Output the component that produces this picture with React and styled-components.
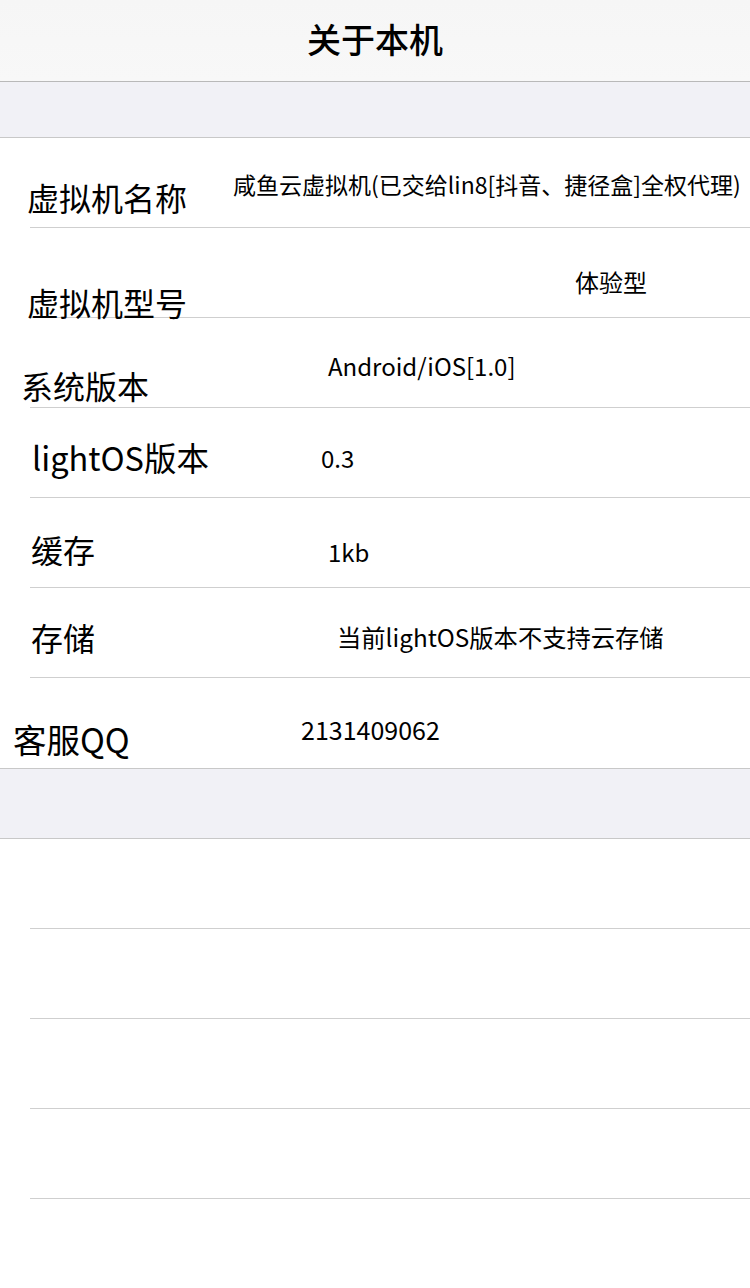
import React from 'react';
import styled, { createGlobalStyle } from 'styled-components';

const GlobalStyle = createGlobalStyle`
  html, body {
    margin: 0;
    padding: 0;
    background: #ffffff;
  }
  body {
    font-family: "Noto Sans CJK SC", "Noto Sans", sans-serif;
    color: #000;
  }
`

const Page = styled.div`
  width: 750px;
  min-height: 1288px;
  background: #ffffff;
`

const NavBar = styled.div`
  height: 81px;
  border-bottom: 1px solid #b9b9b9;
  background: linear-gradient(#f6f6f6, #f8f8f8);
  display: flex;
  align-items: center;
  justify-content: center;
`

const NavTitle = styled.div`
  font-size: 34px;
  font-weight: 500;
  line-height: 1;
  margin-top: -4px;
`

const GroupGap = styled.div`
  height: ${props => props.$height}px;
  background: #f1f1f6;
  border-bottom: 1px solid #c8c8c8;
  border-top: ${props => props.$top ? '1px solid #c8c8c8' : 'none'};
`

const Group = styled.div`
  background: #ffffff;
`

const Row = styled.div`
  position: relative;
  height: 90px;
  display: grid;
  grid-template-columns: ${props => props.$valueX}px 1fr;
  align-items: start;

  &::after {
    content: '';
    display: ${props => props.$last ? 'none' : 'block'};
    position: absolute;
    left: 30px;
    right: 0;
    bottom: 0;
    height: 1px;
    background: #cfcfcf;
  }
`

const Label = styled.div`
  padding-left: ${props => props.$x}px;
  margin-top: ${props => props.$top}px;
  font-size: ${props => props.$size}px;
  line-height: 30px;
  white-space: nowrap;
  position: relative;
  z-index: 1;
`

const Value = styled.div`
  margin-top: ${props => props.$top}px;
  font-size: ${props => props.$size}px;
  line-height: ${props => props.$size}px;
  white-space: nowrap;
`

const infoRows = [
  { label: '虚拟机名称', labelX: 27, labelTop: 44, labelSize: 32, valueX: 233, valueTop: 35, size: 23, value: '咸鱼云虚拟机(已交给lin8[抖音、捷径盒]全权代理)' },
  { label: '虚拟机型号', labelX: 27, labelTop: 59, labelSize: 32, valueX: 575, valueTop: 42, size: 24, value: '体验型' },
  { label: '系统版本', labelX: 21, labelTop: 52, labelSize: 32, valueX: 328, valueTop: 36, size: 24, value: 'Android/iOS[1.0]' },
  { label: 'lightOS版本', labelX: 32, labelTop: 34, labelSize: 32.5, valueX: 321, valueTop: 38, size: 24, value: '0.3' },
  { label: '缓存', labelX: 31, labelTop: 36, labelSize: 32, valueX: 328, valueTop: 42, size: 24, value: '1kb' },
  { label: '存储', labelX: 31, labelTop: 34, labelSize: 32, valueX: 337, valueTop: 37, size: 24.3, value: '当前lightOS版本不支持云存储' },
  { label: '客服QQ', labelX: 13, labelTop: 46, labelSize: 33.5, valueX: 301, valueTop: 39, size: 25, value: '2131409062' },
]

const emptyRows = [1, 2, 3, 4, 5]

function App() {
  return (
    <Page>
      <GlobalStyle />
      <NavBar>
        <NavTitle>关于本机</NavTitle>
      </NavBar>
      <GroupGap $height={55} />
      <Group>
        {infoRows.map((row, i) => (
          <Row key={row.label} $valueX={row.valueX} $last={i === infoRows.length - 1}>
            <Label $x={row.labelX} $top={row.labelTop} $size={row.labelSize}>{row.label}</Label>
            <Value $top={row.valueTop} $size={row.size}>{row.value}</Value>
          </Row>
        ))}
      </Group>
      <GroupGap $height={69} $top />
      <Group>
        {emptyRows.map(n => (
          <Row key={n} $valueX={300} />
        ))}
      </Group>
    </Page>
  );
}

export default App;
